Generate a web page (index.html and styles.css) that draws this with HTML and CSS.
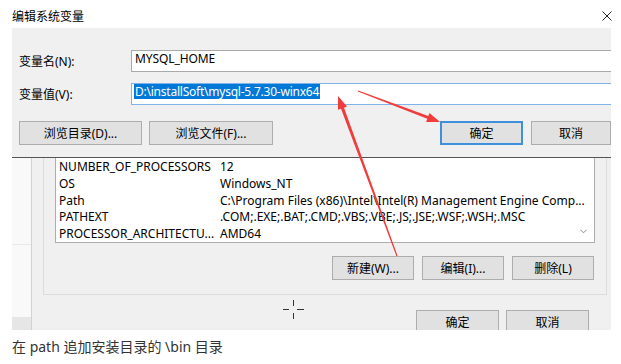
FILE: index.html
```html
<!DOCTYPE html>
<html lang="zh">
<head>
<meta charset="utf-8">
<title>编辑系统变量</title>
<link rel="stylesheet" href="styles.css">
</head>
<body>
<div class="titlebar">
  <span class="title">编辑系统变量</span>
  <svg class="close" width="10" height="10" viewBox="0 0 10 10"><path d="M0.5 0.5 L9.5 9.5 M9.5 0.5 L0.5 9.5" stroke="#222" stroke-width="1" fill="none"/></svg>
</div>
<div class="dialog">
  <div class="field">
    <label class="field-label">变量名(N):</label>
    <div class="input"><span class="input-text">MYSQL_HOME</span></div>
  </div>
  <div class="field">
    <label class="field-label">变量值(V):</label>
    <div class="input input-focus"><span class="input-text selected">D:\installSoft\mysql-5.7.30-winx64</span></div>
  </div>
  <div class="btn-row">
    <div class="btn btn-browse-dir">浏览目录(D)...</div>
    <div class="btn btn-browse-file">浏览文件(F)...</div>
    <div class="btn btn-ok btn-default">确定</div>
    <div class="btn btn-cancel">取消</div>
  </div>
</div>
<div class="behind">
  <div class="strip">
    <div class="strip-top"></div>
    <div class="strip-mid"></div>
    <div class="strip-band"></div>
  </div>
  <div class="window">
    <div class="group">
      <div class="list">
        <div class="row"><span class="col-name">NUMBER_OF_PROCESSORS</span><span class="col-val">12</span></div>
        <div class="row"><span class="col-name">OS</span><span class="col-val">Windows_NT</span></div>
        <div class="row"><span class="col-name">Path</span><span class="col-val">C:\Program Files (x86)\Intel\Intel(R) Management Engine Comp...</span></div>
        <div class="row"><span class="col-name">PATHEXT</span><span class="col-val">.COM;.EXE;.BAT;.CMD;.VBS;.VBE;.JS;.JSE;.WSF;.WSH;.MSC</span></div>
        <div class="row"><span class="col-name">PROCESSOR_ARCHITECTU...</span><span class="col-val">AMD64</span></div>
        <svg class="scroll-down" width="7" height="5" viewBox="0 0 7 5"><path d="M0.5 0.8 L3.5 3.8 L6.5 0.8" stroke="#8a8a8a" stroke-width="1" fill="none"/></svg>
      </div>
      <div class="list-buttons">
        <div class="btn btn-small">新建(W)...</div>
        <div class="btn btn-small">编辑(I)...</div>
        <div class="btn btn-small">删除(L)</div>
      </div>
    </div>
    <div class="bottom-buttons">
      <div class="btn btn-small">确定</div>
      <div class="btn btn-small">取消</div>
    </div>
    <svg class="cursor" width="21" height="19" viewBox="0 0 21 19"><path d="M10.5 0 V6 M10.5 13 V19 M0 9.5 H6 M14 9.5 H21" stroke="#333" stroke-width="1" fill="none"/></svg>
  </div>
</div>
<p class="caption">在 path 追加安装目录的 \bin 目录</p>
<svg class="arrows" width="621" height="364" viewBox="0 0 621 364">
  <polygon fill="#f03c3c" points="397.56,255.79 344.0,107.64 347.0,106.53 338,96 338.0,109.87 341.0,108.76 396.44,256.21"/>
  <polygon fill="#f03c3c" points="357.82,91.47 427.3,118.8 426.1,121.9 440,122 429.5,112.9 428.3,116.0 358.18,90.53"/>
</svg>
</body>
</html>
```
FILE: styles.css
```css
* { box-sizing: border-box; }

body {
  margin: 0;
  width: 621px;
  height: 364px;
  overflow: hidden;
  position: relative;
  background: #fff;
  color: #000;
  font-family: "Noto Sans", "Noto Sans CJK SC", sans-serif;
  font-size: 12px;
}

.titlebar {
  height: 28px;
  padding: 3px 9px 0 12px;
  display: flex;
  align-items: center;
  justify-content: space-between;
}

.title { font-size: 12px; color: #000; }

.dialog {
  margin-left: 12px;
  width: 599px;
  height: 130px;
  background: #f0f0f0;
  border-bottom: 1px solid #555;
  padding: 22px 0 0 7px;
  overflow: hidden;
}

.field {
  display: flex;
  align-items: center;
  height: 22px;
}
.field + .field { margin-top: 11px; }

.field-label { width: 112px; flex: none; }

.input {
  flex: 1;
  height: 22px;
  background: #fff;
  border: 1px solid #a9a9a9;
  border-right: none;
  padding-left: 2px;
  display: flex;
  align-items: flex-start;
}
.input-focus { border-color: #7eb4ea; }

.input-text { line-height: 16px; padding: 0 1px; letter-spacing: -0.1px; }
.selected { background: #0078d7; color: #fff; line-height: 15px; letter-spacing: -0.23px; }

.btn-row {
  display: flex;
  margin-top: 16px;
  height: 24px;
}

.btn {
  height: 24px;
  background: #e1e1e1;
  border: 1px solid #adadad;
  display: flex;
  align-items: center;
  justify-content: center;
  flex: none;
}
.btn-browse-dir { width: 123px; }
.btn-browse-file { width: 124px; margin-left: 7px; }
.btn-ok { width: 83px; margin-left: auto; }
.btn-cancel { width: 80px; margin-left: 8px; }
.btn-default { border: 2px solid #3f8fdb; }

.behind {
  display: flex;
  height: 172px;
}

.strip {
  margin-left: 12px;
  width: 19px;
  background: #f9f9f9;
  display: flex;
  flex-direction: column;
}
.strip-top { height: 87px; border-bottom: 1px solid #e8e8e8; }
.strip-mid { flex: 1; }
.strip-band { height: 13px; background: #e6e6e6; }

.window {
  position: relative;
  width: 580px;
  background: #f0f0f0;
  border-left: 1px solid #d2d2d2;
  padding-left: 11px;
  overflow: hidden;
}

.group {
  width: 564px;
  border: 1px solid #dcdcdc;
  border-top: none;
  padding: 0 11px 14px 11px;
}

.list {
  position: relative;
  width: 540px;
  height: 85px;
  background: #fff;
  border: 1px solid #adadad;
  border-top: none;
  padding: 1px 0 0 3px;
}

.row {
  display: flex;
  height: 16.75px;
  line-height: 16.75px;
  white-space: nowrap;
}
.col-name { width: 161px; flex: none; }

.scroll-down {
  position: absolute;
  right: 7px;
  bottom: 8px;
}

.list-buttons {
  display: flex;
  justify-content: flex-end;
  gap: 8px;
  margin-top: 13px;
  margin-right: 1px;
}
.btn-small { width: 82px; }

.bottom-buttons {
  display: flex;
  justify-content: flex-end;
  gap: 7px;
  margin-top: 15px;
  margin-right: 22px;
}
.bottom-buttons .btn-small { width: 83px; }

.cursor {
  position: absolute;
  left: 251px;
  top: 142px;
}

.caption {
  margin: 7px 0 0 0;
  padding-left: 12px;
  font-size: 14px;
  line-height: 20px;
  color: #333;
}

.arrows {
  position: absolute;
  left: 0;
  top: 0;
  pointer-events: none;
}
```
